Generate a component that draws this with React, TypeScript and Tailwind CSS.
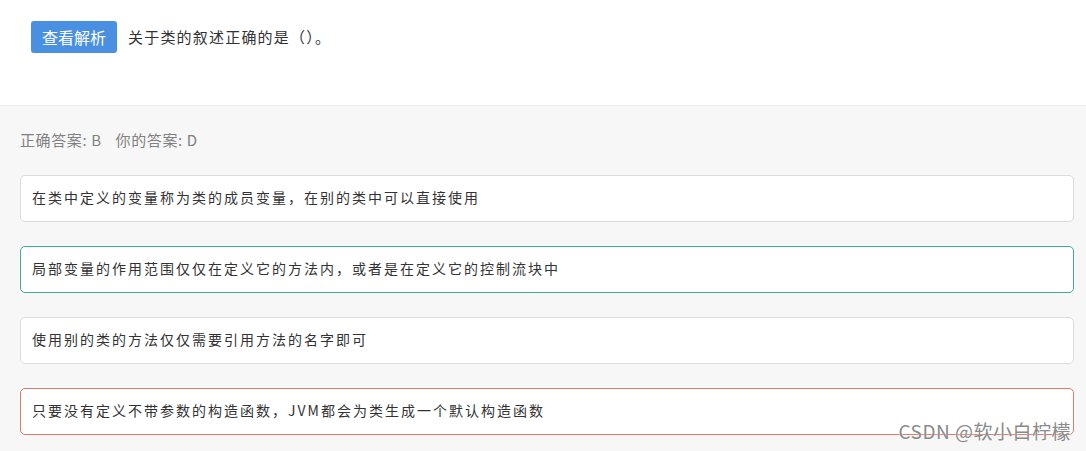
import React from 'react';

interface Option {
    text: string;
    state: 'normal' | 'correct' | 'wrong';
}

const options: Option[] = [
    { text: '在类中定义的变量称为类的成员变量，在别的类中可以直接使用', state: 'normal' },
    { text: '局部变量的作用范围仅仅在定义它的方法内，或者是在定义它的控制流块中', state: 'correct' },
    { text: '使用别的类的方法仅仅需要引用方法的名字即可', state: 'normal' },
    { text: '只要没有定义不带参数的构造函数，JVM都会为类生成一个默认构造函数', state: 'wrong' },
];

const borderFor = (s: Option['state']) =>
    s === 'correct' ? 'border-[#3fae96]' : s === 'wrong' ? 'border-[#e07a68]' : 'border-[#dcdcdc]';

export default function App() {
    return (
        <div className="w-[1086px] h-[451px] overflow-hidden bg-[#f7f7f7] relative font-['Noto_Sans_CJK_SC',sans-serif]">
            {/* Question header */}
            <div className="h-[106px] bg-white border-b border-[#ececec] flex items-start pt-[21px] pl-[31px]">
                <button className="h-[32px] w-[86px] rounded-[3px] bg-[#4a90e2] text-white text-[16px] flex items-center justify-center">
                    查看解析
                </button>
                <div className="ml-[11px] h-[32px] flex items-center text-[15px] tracking-[1.2px] text-[#333]">关于类的叙述正确的是（）。</div>
            </div>

            {/* Answers */}
            <div className="pl-[20px] pr-[12px]">
                <div className="h-[69px] flex items-center text-[15px] tracking-[0.6px] text-[#808080]">
                    <span>正确答案: B</span>
                    <span className="ml-[14px]">你的答案: D</span>
                </div>
                <div className="flex flex-col gap-[24px]">
                    {options.map((o) => (
                        <div
                            key={o.text}
                            className={`h-[47px] bg-white border rounded-[5px] ${borderFor(o.state)} flex items-center pl-[11px] pb-[3px] text-[14px] tracking-[2px] text-[#333]`}
                        >
                            {o.text}
                        </div>
                    ))}
                </div>
            </div>

            {/* Watermark */}
            <div className="absolute right-[15px] top-[417px] text-[19px] tracking-[0.5px] text-[#8a8a8a] [text-shadow:0_0_2px_#fff] font-['Noto_Sans_CJK_SC',sans-serif]">
                CSDN @软小白柠檬
            </div>
        </div>
    );
}
